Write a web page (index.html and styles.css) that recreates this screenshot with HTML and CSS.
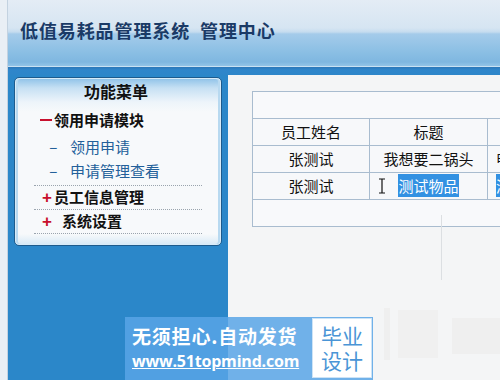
FILE: index.html
```html
<!DOCTYPE html>
<html lang="zh-CN">
<head>
    <meta charset="UTF-8">
    <title>低值易耗品管理系统 管理中心</title>
    <link rel="stylesheet" href="styles.css">
</head>
<body>
<div class="page">
    <div class="edge"></div>
    <div class="main">
        <header class="top">
            <h1>低值易耗品管理系统&nbsp; 管理中心</h1>
        </header>
        <div class="band"></div>
        <div class="body">
            <aside class="side">
                <div class="menu">
                    <div class="menu-title">功能菜单</div>
                    <div class="group open">
                        <div class="module"><span class="minus"></span>领用申请模块</div>
                        <ul class="sub">
                            <li><span class="dash">−</span>领用申请</li>
                            <li><span class="dash">−</span>申请管理查看</li>
                        </ul>
                    </div>
                    <div class="group">
                        <div class="module closed"><span class="sign">+</span>员工信息管理</div>
                    </div>
                    <div class="group">
                        <div class="module closed"><span class="sign">+</span><span class="gap">系统设置</span></div>
                    </div>
                </div>
            </aside>
            <section class="content">
                <table class="grid">
                    <tr class="cap"><td colspan="3"></td></tr>
                    <tr>
                        <td class="c1">员工姓名</td>
                        <td class="c2">标题</td>
                        <td class="c3"></td>
                    </tr>
                    <tr>
                        <td class="c1">张测试</td>
                        <td class="c2">我想要二锅头</td>
                        <td class="c3">申请中</td>
                    </tr>
                    <tr>
                        <td class="c1">张测试</td>
                        <td class="c2 pick">
                            <svg class="ibeam" width="8" height="16" viewBox="0 0 8 16"><path d="M1 1h6M4 1v14M1 15h6" stroke="#111" stroke-width="1.2" fill="none"/></svg>
                            <span class="sel">测试物品</span>
                        </td>
                        <td class="c3"><span class="sel">测试</span></td>
                    </tr>
                    <tr class="cap"><td colspan="3"></td></tr>
                </table>
                <div class="vline"></div>
            </section>
        </div>
    </div>
    <div class="mark">
        <div class="mark-text">
            <p class="slogan">无须担心.自动发货</p>
            <p class="site">www.51topmind.com</p>
        </div>
        <div class="mark-tag">
            <p>毕业</p>
            <p>设计</p>
        </div>
    </div>
    <div class="ghost g1"></div>
    <div class="ghost g2"></div>
    <div class="ghost g3"></div>
</div>
</body>
</html>
```

FILE: styles.css
```css
html,body{ height:100%; }
body,ul,p,h1{ margin:0; padding:0; }
body{
    font-family:"Noto Sans CJK SC","Liberation Sans",sans-serif;
    background:#f4f5f6;
    overflow:hidden;
}
.page{
    position:relative;
    display:flex;
    width:500px;
    height:380px;
}
.edge{
    flex:none;
    width:7px;
    border-right:1px solid #c3d2e0;
    background:#e9eff5;
}
.main{
    flex:1;
    min-width:0;
    display:flex;
    flex-direction:column;
}

/* header */
.top{
    height:66px;
    border-bottom:1px solid #c9e1f2;
    background:linear-gradient(#e4ecf5 0, #d6e5f2 28px, #c5dcef 32px, #a4cbea 34px, #8bbfe4 52px, #7fb7e0 62px, #93c4e7 66px);
    padding-left:12px;
}
.top h1{
    font-size:18px;
    line-height:18px;
    font-weight:bold;
    color:#1a3a66;
    margin-top:21px;
    letter-spacing:0.9px;
    white-space:nowrap;
}
.band{
    height:8px;
    background:linear-gradient(#2c77b8, #2f86cb 3px, #2d86c9);
}

/* sidebar */
.body{
    flex:1;
    display:flex;
    min-width:0;
}
.side{
    flex:none;
    width:220px;
    background:#2b87c9;
}
.menu{
    margin:2px 6px 0;
    height:167px;
    border:1px solid #1d5b8d;
    border-radius:5px;
    background:linear-gradient(#8dc1e8 0, #c6e0f3 10px, #edf4fa 24px, #f7f9fb 34px, #f7f9fb 156px, #d6e9f6 167px);
    box-shadow:inset 0 0 0 1px #d8ebf8, inset 2px 0 0 1px #b8d9f0, inset -2px 0 0 1px #b8d9f0;
}
.menu-title{
    height:30px;
    line-height:26px;
    text-align:center;
    font-size:16px;
    font-weight:bold;
    color:#111;
    padding-right:4px;
}
.group{
    margin:0 19px;
    border-bottom:1px dotted #9aa4ae;
    height:23px;
}
.group.open{
    height:76px;
    margin-top:1px;
}
.module{
    display:flex;
    align-items:center;
    height:21px;
    font-size:15px;
    font-weight:bold;
    color:#111;
    padding-left:6px;
    margin-bottom:3px;
}
.module.closed{
    display:block;
    padding-left:8px;
    height:23px;
    line-height:19px;
    padding-top:1px;
    margin-bottom:0;
    box-sizing:border-box;
}
.minus{
    width:12px;
    height:2px;
    margin-right:2px;
    background:#c8102e;
}
.sign{
    display:inline-block;
    width:12px;
    color:#c8102e;
    font-family:"Liberation Sans",sans-serif;
    font-size:17px;
}
.gap{ margin-left:8px; }
.sub{
    list-style:none;
    padding-top:2px;
}
.sub li{
    height:24px;
    line-height:24px;
    font-size:15px;
    color:#23609a;
    padding-left:15px;
}
.dash{
    display:inline-block;
    width:21px;
    font-family:"Liberation Sans",sans-serif;
    font-size:14px;
}

/* content */
.content{
    position:relative;
    flex:1;
    min-width:0;
    padding:16px 0 0 24px;
    overflow:hidden;
    background:#f4f5f6;
}
.grid{
    border-collapse:collapse;
    width:420px;
    background:#f7f8fa;
    font-size:15px;
    color:#111;
}
.grid td{
    border:1px solid #a9bccf;
    height:26px;
    padding:0;
    line-height:26px;
    text-align:center;
    white-space:nowrap;
}
.grid .cap td{ height:26px; background:#f8f9fb; }
.grid .c1{ width:116px; }
.grid .c2{ width:117px; }
.grid .c3{ text-align:left; padding-left:8px; }
.pick{ position:relative; }
.ibeam{
    position:absolute;
    left:8px;
    top:5px;
}
.sel{
    background:#3391e2;
    color:#fff;
    padding:1px 0;
}
.vline{
    position:absolute;
    left:213px;
    top:140px;
    width:1px;
    height:65px;
    background:#dcdfe2;
}

/* watermark */
.mark{
    position:absolute;
    left:125px;
    top:317px;
    width:248px;
    height:63px;
    display:flex;
    background:rgba(88,164,230,.85);
}
.mark-text{
    flex:1;
    min-width:0;
    padding:5px 0 0 7px;
    color:#fff;
    font-weight:bold;
    white-space:nowrap;
}
.slogan{
    font-size:19px;
    line-height:27px;
    letter-spacing:0.8px;
}
.site{
    font-family:"Open Sans","Liberation Sans",sans-serif;
    font-size:16px;
    line-height:24px;
    text-decoration:underline;
    letter-spacing:-0.2px;
}
.mark-tag{
    flex:none;
    width:60px;
    margin:1px 1px 2px 0;
    background:#fff;
    border:1px solid #cde3f6;
    color:#4a95d6;
    font-size:21px;
    line-height:25px;
    text-align:center;
    padding-top:4px;
    box-sizing:border-box;
}
.ghost{
    position:absolute;
    background:#ebebeb;
}
.g1{ left:384px; top:308px; width:6px; height:52px; background:#efefef; }
.g2{ left:398px; top:310px; width:40px; height:48px; background:#f0f0f0; }
.g3{ left:452px; top:318px; width:48px; height:36px; background:#efefef; }
```
